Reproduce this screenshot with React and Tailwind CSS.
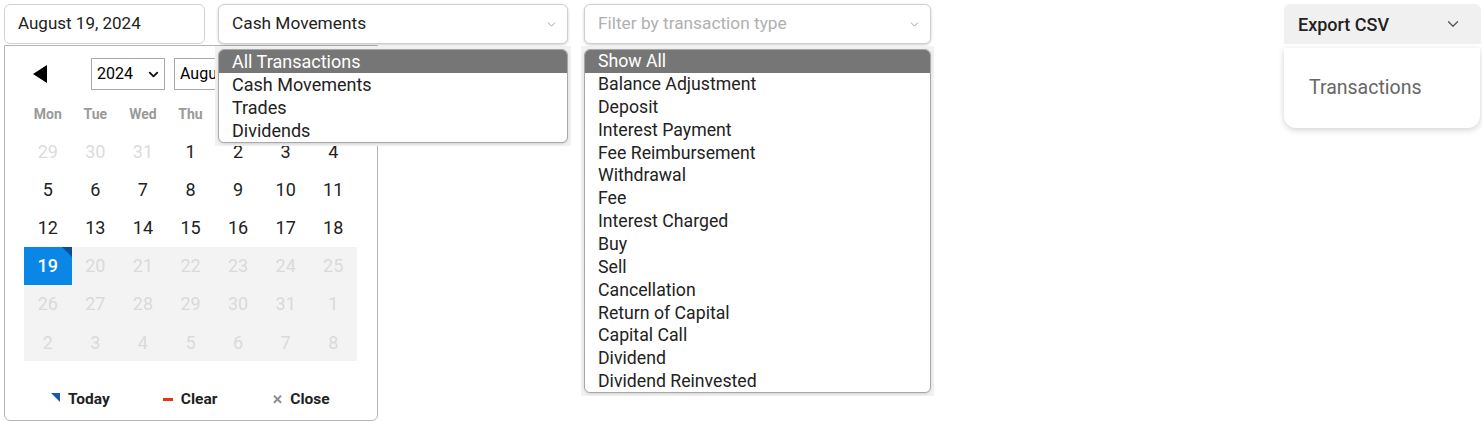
import { ChevronDown } from 'lucide-react';

const font = { fontFamily: 'Roboto, "Noto Sans", sans-serif' };

const typeOptions = ['All Transactions', 'Cash Movements', 'Trades', 'Dividends'];

const filterOptions = [
  'Show All',
  'Balance Adjustment',
  'Deposit',
  'Interest Payment',
  'Fee Reimbursement',
  'Withdrawal',
  'Fee',
  'Interest Charged',
  'Buy',
  'Sell',
  'Cancellation',
  'Return of Capital',
  'Capital Call',
  'Dividend',
  'Dividend Reinvested',
];

const weekdays = ['Mon', 'Tue', 'Wed', 'Thu', 'Fri', 'Sat', 'Sun'];

// each day: [label, state] — state: 'out' (other month), 'on', 'today', 'off' (future, greyed)
const days = [
  ['29', 'out'], ['30', 'out'], ['31', 'out'], ['1', 'on'], ['2', 'on'], ['3', 'on'], ['4', 'on'],
  ['5', 'on'], ['6', 'on'], ['7', 'on'], ['8', 'on'], ['9', 'on'], ['10', 'on'], ['11', 'on'],
  ['12', 'on'], ['13', 'on'], ['14', 'on'], ['15', 'on'], ['16', 'on'], ['17', 'on'], ['18', 'on'],
  ['19', 'today'], ['20', 'off'], ['21', 'off'], ['22', 'off'], ['23', 'off'], ['24', 'off'], ['25', 'off'],
  ['26', 'off'], ['27', 'off'], ['28', 'off'], ['29', 'off'], ['30', 'off'], ['31', 'off'], ['1', 'off'],
  ['2', 'off'], ['3', 'off'], ['4', 'off'], ['5', 'off'], ['6', 'off'], ['7', 'off'], ['8', 'off'],
];

function DayCell({ label, state }) {
  if (state === 'today') {
    return (
      <div className="relative flex items-center justify-center h-[38.2px] bg-[#0a86e6] text-white font-medium text-[18px]">
        {label}
        <span className="absolute top-0 right-0 w-0 h-0 border-t-[10px] border-l-[10px] border-t-[#0b4f9c] border-l-transparent" />
      </div>
    );
  }
  const cls =
    state === 'out'
      ? 'text-[#dcdcdc]'
      : state === 'off'
      ? 'bg-[#f3f3f3] text-[#dadada]'
      : 'text-[#222]';
  return (
    <div className={`flex items-center justify-center h-[38.2px] text-[18px] ${cls}`}>{label}</div>
  );
}

function Calendar() {
  return (
    <div className="absolute left-0 top-[41px] w-[374px] h-[376px] bg-white border border-[#b5b5b5] rounded-b-md pt-[12px]">
      <div className="flex items-center h-[32px]">
        <svg width="14" height="18" viewBox="0 0 14 18" className="ml-[28px]">
          <polygon points="14,0 14,18 0,9" fill="#000" />
        </svg>
        <div className="ml-[44px] w-[74px] h-[32px] border border-[#a9a9a9] flex items-center justify-between pl-[5px] pr-[3px] text-[16px] text-black">
          2024
          <ChevronDown size={15} strokeWidth={3} color="#111" />
        </div>
        <div className="ml-[9px] w-[120px] h-[32px] border border-[#a9a9a9] flex items-center pl-[5px] text-[16px] text-black">
          August
        </div>
      </div>
      <div className="mx-[19px] mt-[4px] w-[333px]">
        <div className="grid grid-cols-7 h-[38px] items-center pt-[2px]">
          {weekdays.map((d) => (
            <div key={d} className="text-center text-[14px] font-bold text-[#9a9a9a]">
              {d}
            </div>
          ))}
        </div>
        <div className="grid grid-cols-7">
          {days.map(([label, state], i) => (
            <DayCell key={i} label={label} state={state} />
          ))}
        </div>
      </div>
      <div className="flex items-center mt-[18px] h-[40px] text-[15.5px] font-bold text-[#222]">
        <div className="flex items-center ml-[46px]">
          <span className="w-0 h-0 border-t-[9px] border-l-[9px] border-t-[#1759b4] border-l-transparent mt-[-4px]" />
          <span className="ml-[8px]">Today</span>
        </div>
        <div className="flex items-center ml-[53px]">
          <span className="w-[10px] h-[3px] bg-[#e8321a]" />
          <span className="ml-[8px]">Clear</span>
        </div>
        <div className="flex items-center ml-[55px]">
          <span className="text-[#8a8a8a] text-[13px] leading-none">✕</span>
          <span className="ml-[7px]">Close</span>
        </div>
      </div>
    </div>
  );
}

function ListBox({ options, rowHeight, textSize, className }) {
  return (
    <div className={`absolute bg-[#f1f1f1] p-[3px] ${className}`}>
      <div className="h-full bg-white border border-[#a8a8a8] rounded-[6px] overflow-hidden shadow-sm">
        {options.map((o, i) => (
          <div
            key={o}
            className={`pl-[13px] flex items-center ${textSize} ${i === 0 ? 'bg-[#767676] text-white' : 'text-[#222]'}`}
            style={{ height: rowHeight }}
          >
            {o}
          </div>
        ))}
      </div>
    </div>
  );
}

function SelectBox({ children, placeholder, width }) {
  return (
    <div
      className={`h-[40px] bg-white border border-[#cfcfcf] rounded-[6px] shadow-[0_1px_3px_rgba(0,0,0,0.2)] flex items-center justify-between pl-[13px] pr-[9px] text-[17.3px] ${
        placeholder ? 'text-[#b0b0b0]' : 'text-[#222]'
      } ${width}`}
    >
      {children}
      <ChevronDown size={13} strokeWidth={1.5} color="#888" />
    </div>
  );
}

export default function App() {
  return (
    <div className="w-[1482px] h-[421px] bg-white overflow-hidden" style={font}>
      <div className="flex items-start pt-[4px] pl-[4px] pr-[1px]">
        <div className="relative">
          <div className="w-[201px] h-[40px] border border-[#d2d2d2] rounded-[6px] flex items-center pl-[13px] text-[17px] text-[#222]">
            August 19, 2024
          </div>
          <Calendar />
        </div>

        <div className="relative ml-[13px]">
          <SelectBox width="w-[350px]">Cash Movements</SelectBox>
          <ListBox
            options={typeOptions}
            rowHeight="23px"
            textSize="text-[18px]"
            className="left-[-3px] top-[42px] w-[356px] h-[100px]"
          />
        </div>

        <div className="relative ml-[16px]">
          <SelectBox width="w-[347px]" placeholder>
            Filter by transaction type
          </SelectBox>
          <ListBox
            options={filterOptions}
            rowHeight="22.86px"
            textSize="text-[17.7px]"
            className="left-[-3px] top-[42px] w-[353px] h-[350px]"
          />
        </div>

        <div className="relative ml-auto">
          <div className="w-[197px] h-[40px] bg-[#f0f0f0] rounded-t-[6px] flex items-center justify-between pl-[14px] pr-[19px] text-[18px] font-medium text-[#222]">
            Export CSV
            <ChevronDown size={18} strokeWidth={1.75} color="#555" />
          </div>
          <div className="absolute left-0 top-[44px] w-[196px] h-[80px] bg-white rounded-b-[12px] shadow-[0_2px_6px_rgba(0,0,0,0.18)] flex items-center pl-[25px] text-[19.5px] text-[#666]">
            Transactions
          </div>
        </div>
      </div>
    </div>
  );
}
